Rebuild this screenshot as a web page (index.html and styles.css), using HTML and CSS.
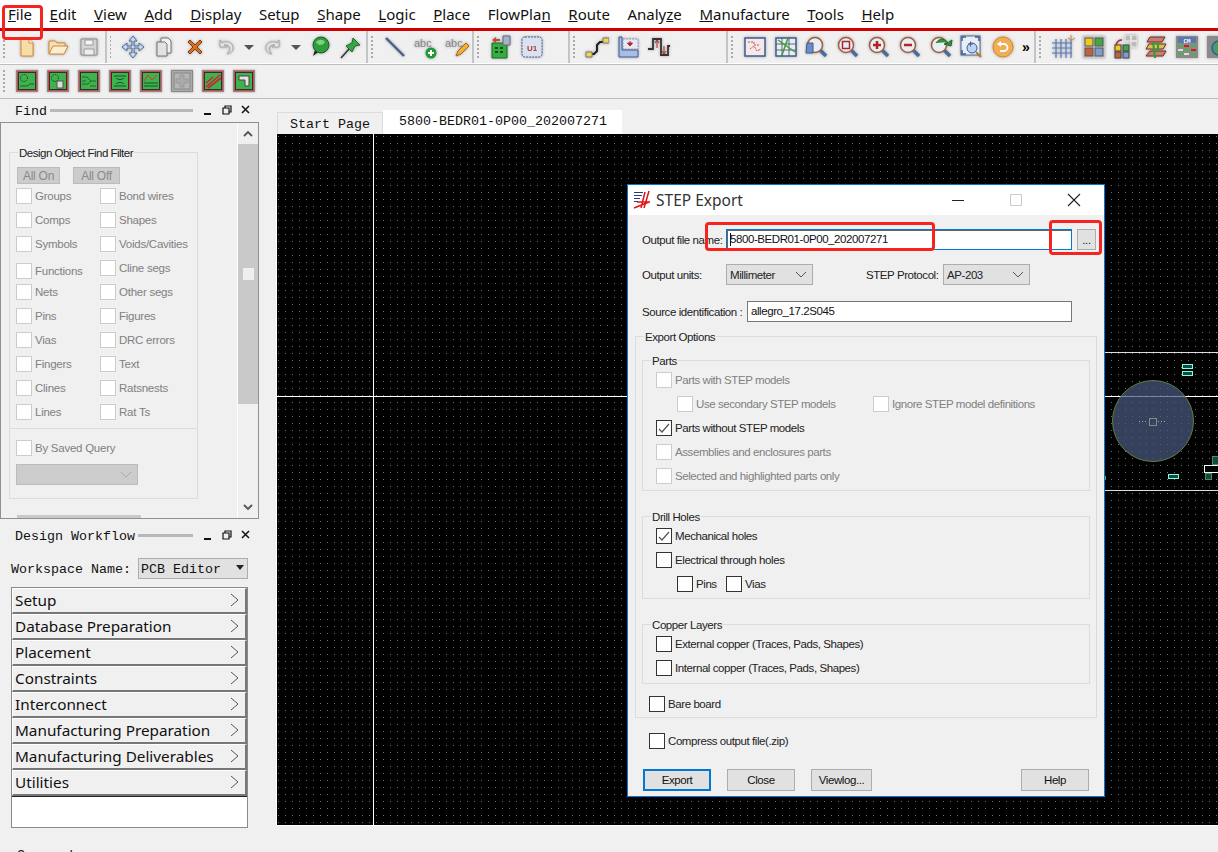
FILE: index.html
```html
<!DOCTYPE html>
<html lang="en">
<head>
<meta charset="utf-8">
<title>STEP Export</title>
<link rel="stylesheet" href="styles.css">
</head>
<body>
<svg class="defs" width="0" height="0" aria-hidden="true">
  <defs>
    <symbol id="i-new" viewBox="0 0 24 24"><path d="M6 4h8l4 4v13H6z" fill="#f6dca6" stroke="#d68a2e"/><path d="M14 4v4h4" fill="#fff" stroke="#d68a2e"/></symbol>
    <symbol id="i-open" viewBox="0 0 24 24"><path d="M3 19V6h6l2 2h8v3" fill="#f7e0b0" stroke="#c98a3c"/><path d="M3 19l4-8h15l-4 8z" fill="#fbeed0" stroke="#c98a3c"/></symbol>
    <symbol id="i-save" viewBox="0 0 24 24"><path d="M4 4h16v16H4z" fill="#d4d4d4" stroke="#8f8f8f"/><path d="M8 5h8v5H8z" fill="#f5f5f5" stroke="#9a9a9a"/><path d="M7 14h10v6H7z" fill="#eee" stroke="#9a9a9a"/></symbol>
    <symbol id="i-move" viewBox="0 0 24 24"><path d="M12 1l4 5h-3v5h5V8l5 4-5 4v-3h-5v5h3l-4 5-4-5h3v-5H6v3l-5-4 5-4v3h5V6H8z" fill="#c9d9ee" stroke="#4d6f9e"/></symbol>
    <symbol id="i-copy" viewBox="0 0 24 24"><path d="M9 3h7l3 3v12H9z" fill="#f2f2f2" stroke="#777"/><path d="M5 7h8l2 2v12H5z" fill="#e2e2e2" stroke="#777"/></symbol>
    <symbol id="i-del" viewBox="0 0 24 24"><path d="M5 7l2-2 5 5 5-5 2 2-5 5 5 5-2 2-5-5-5 5-2-2 5-5z" fill="#d9711e" stroke="#7c3b12"/></symbol>
    <symbol id="i-undo" viewBox="0 0 24 24"><path d="M6 5v7h7l-3-2c3-1 6 1 6 4 0 2-2 4-3 5 4-1 6-3 6-6 0-5-6-8-11-5z" fill="#e3e3e3" stroke="#aaa"/></symbol>
    <symbol id="i-redo" viewBox="0 0 24 24"><path d="M18 5v7h-7l3-2c-3-1-6 1-6 4 0 2 2 4 3 5-4-1-6-3-6-6 0-5 6-8 11-5z" fill="#e3e3e3" stroke="#aaa"/></symbol>
    <symbol id="i-ball" viewBox="0 0 24 24"><path d="M5 21l2-6h6z" fill="#222"/><circle cx="13" cy="10" r="8" fill="#2f9b3c" stroke="#1d5e28"/><path d="M8 7c3-3 7-3 9 0-2 3-6 5-9 0z" fill="#7dd07f"/></symbol>
    <symbol id="i-pin" viewBox="0 0 24 24"><path d="M2 23l8-9" stroke="#333" stroke-width="1.5"/><path d="M7 11l6-3 1-5 7 7-5 1-3 6z" fill="#35a843" stroke="#1f6b2b"/></symbol>
    <symbol id="i-line" viewBox="0 0 24 24"><path d="M3 3l18 18" stroke="#4b5f8a" stroke-width="2.4"/></symbol>
    <symbol id="i-abcp" viewBox="0 0 24 24"><text x="0" y="12" class="svgabc">abc</text><circle cx="17" cy="18" r="5.5" fill="#1f9a33"/><path d="M17 15v6M14 18h6" stroke="#fff" stroke-width="2"/></symbol>
    <symbol id="i-abce" viewBox="0 0 24 24"><text x="0" y="12" class="svgabc">abc</text><path d="M11 21l2-5 8-8 3 3-8 8z" fill="#f0b030" stroke="#a5651a"/></symbol>
    <symbol id="i-brd" viewBox="0 0 24 24"><path d="M3 8h15v15H3z" fill="#35ad41" stroke="#1d6a2a"/><path d="M6 12h3v2H6zM11 12h3v2h-3zM6 16h3v2H6zM11 16h3v2h-3z" fill="#154d1f"/><path d="M3 5l4-3v2h4v2H7v2z" fill="#c9452f"/><path d="M14 1h7v9h-7z" fill="#a7b3c5" stroke="#5e6a80"/></symbol>
    <symbol id="i-u1" viewBox="0 0 24 24"><rect x="2" y="2" width="20" height="20" rx="3" fill="#dbe2ef" stroke="#3f5c95" stroke-dasharray="2 1"/><text x="12" y="16" class="svgu1">U1</text></symbol>
    <symbol id="i-rt" viewBox="0 0 24 24"><path d="M5 19h4l3-3v-6l3-3h4" fill="none" stroke="#222" stroke-width="2"/><path d="M1 17h6v5H1zM18 3h6v5h-6z" fill="#f1d84a" stroke="#777"/></symbol>
    <symbol id="i-cb" viewBox="0 0 24 24"><path d="M3 2h3v13h16v7H3z" fill="#a9bde0" stroke="#3e5a94"/><path d="M7 4h15v10H7z" fill="#e6e9f2" stroke="#8d9bbd" stroke-dasharray="2 1"/><path d="M14 6v4M11.500 8l2.500 3 2.500-3z" fill="#b5232a" stroke="#b5232a"/></symbol>
    <symbol id="i-zig" viewBox="0 0 24 24"><path d="M1 14h5V4h8v16h7V11h2" fill="none" stroke="#333" stroke-width="1.800"/><path d="M10 6v7M8 8l2-3 2 3" stroke="#b5232a" fill="none"/><path d="M17 11v7M15 16l2 3 2-3" stroke="#b5232a" fill="none"/></symbol>
    <symbol id="i-v1" viewBox="0 0 24 24"><rect x="2" y="3" width="20" height="18" fill="#f4e8e8" stroke="#3f5c95" stroke-width="1.500"/><path d="M5 7h6v3h5M7 14l4-3 3 5 4-2" fill="none" stroke="#b55" stroke-dasharray="2 1"/></symbol>
    <symbol id="i-v2" viewBox="0 0 24 24"><rect x="2" y="3" width="20" height="18" fill="#e8f0e6" stroke="#3f5c95" stroke-width="1.500"/><path d="M2 9h20M2 15h20M8 3v18M15 3v18" stroke="#447" stroke-width=".8"/><path d="M4 5l17 12M14 3l-6 17" stroke="#3d9b45" stroke-width="1.500"/></symbol>
    <symbol id="zbase" viewBox="0 0 24 24"><path d="M14 14l7 7" stroke="#4a6a9e" stroke-width="3.500"/><circle cx="10" cy="10" r="7.500" fill="#e8eef6" stroke="#a2603a" stroke-width="1.500"/></symbol>
    <symbol id="i-z0" viewBox="0 0 24 24"><use href="#zbase"/><path d="M2 8h6v10H1z" fill="#6e8dc0" stroke="#3f5c95"/></symbol>
    <symbol id="i-z1" viewBox="0 0 24 24"><use href="#zbase"/><rect x="6.500" y="6.500" width="7" height="7" fill="none" stroke="#b5232a" stroke-width="1.500"/></symbol>
    <symbol id="i-z2" viewBox="0 0 24 24"><use href="#zbase"/><path d="M10 6v8M6 10h8" stroke="#b5232a" stroke-width="2.500"/></symbol>
    <symbol id="i-z3" viewBox="0 0 24 24"><use href="#zbase"/><path d="M6 10h8" stroke="#b5232a" stroke-width="2.500"/></symbol>
    <symbol id="i-z4" viewBox="0 0 24 24"><use href="#zbase"/><path d="M7 8c3-5 9-5 12 0l-4 1 7 2 1-6-3 2" fill="#2f8f3c" stroke="#1d6a2a"/></symbol>
    <symbol id="i-zf" viewBox="0 0 24 24"><rect x="1" y="1" width="19" height="19" fill="#e8eef6" stroke="#51698e"/><path d="M2 6V2h4M19 6V2h-4M2 15v4h4" fill="none" stroke="#3e5a94" stroke-width="1.500"/><circle cx="12" cy="13" r="5" fill="#bcd5f1" stroke="#3e5a94"/><path d="M16 17l5 5" stroke="#b5752a" stroke-width="2"/><path d="M8 9h5M10.500 6.500v5" stroke="#3e5a94"/></symbol>
    <symbol id="i-rf" viewBox="0 0 24 24"><circle cx="12" cy="12" r="10" fill="#f1ad53" stroke="#d98825"/><path d="M8 9h5a3.500 3.500 0 0 1 0 7H9" fill="none" stroke="#fff" stroke-width="1.800"/><path d="M6 9l4-3v6z" fill="#fff"/></symbol>
    <symbol id="i-grid" viewBox="0 0 24 24"><path d="M1 8h20M1 13h20M1 18h20M5 4v19M10 4v19M15 4v19M20 4v19" stroke="#5a78b8" stroke-width="1.200"/><path d="M20 0v4M17 3l3 2M24 3l-3 2" stroke="#e08a2a"/></symbol>
    <symbol id="i-col" viewBox="0 0 24 24"><rect x="1" y="1" width="22" height="22" fill="#c9c9c9"/><rect x="3" y="3" width="8" height="8" fill="#f2c81c" stroke="#555"/><rect x="13" y="3" width="8" height="8" fill="#3fa845" stroke="#555"/><rect x="3" y="13" width="8" height="8" fill="#c0623f" stroke="#555"/><rect x="13" y="13" width="8" height="8" fill="#7f9bd0" stroke="#555"/></symbol>
    <symbol id="i-col2" viewBox="0 0 24 24"><path d="M12 0h6v6h-6zM18 0h6v6h-6zM18 6h6v6h-6z" fill="#bbb" stroke="#eee"/><path d="M3 10c1-4 3-5 6-5" fill="none" stroke="#b5232a" stroke-width="1.500"/><rect x="2" y="10" width="6" height="6" fill="#f2c81c" stroke="#444"/><rect x="10" y="10" width="6" height="6" fill="#3fa845" stroke="#444"/><rect x="2" y="17" width="6" height="6" fill="#c0623f" stroke="#444"/><rect x="10" y="17" width="6" height="6" fill="#7f9bd0" stroke="#444"/></symbol>
    <symbol id="i-lay" viewBox="0 0 24 24"><path d="M6 2h15l-3 5H3z" fill="#c67f6a" stroke="#7b2a2a"/><path d="M5 9h17l-3 5H2z" fill="#d7c24a" stroke="#7b2a2a"/><path d="M6 16h16l-3 5H2z" fill="#c67f6a" stroke="#7b2a2a"/><path d="M9 7l2 16M14 7v10" stroke="#2f9b3c" stroke-width="2"/></symbol>
    <symbol id="i-cm" viewBox="0 0 24 24"><rect x="1" y="1" width="22" height="22" fill="#8a8a8a"/><rect x="3" y="2" width="18" height="6" fill="#5a78b0"/><text x="12" y="7.500" class="svgcm">CM</text><path d="M3 10h5v2H3zM16 10h5v2h-5zM9 14h5v2H9zM3 18h5v2H3zM16 18h5v2h-5z" fill="#3fbb45"/><path d="M9 10h5v2H9zM16 14h5v2h-5z" fill="#e0151a"/><path d="M3 14h5v2H3zM9 18h5v2H9z" fill="#ddd"/></symbol>
    <symbol id="i-gl" viewBox="0 0 24 24"><rect x="1" y="1" width="22" height="22" fill="#8a8a8a"/><circle cx="13" cy="13" r="7" fill="#4a9c5e" stroke="#2a5e9e" stroke-width="1.500"/></symbol>
    <symbol id="t-base" viewBox="0 0 22 22"><rect x=".5" y=".5" width="21" height="21" fill="#c64a50" stroke="#8a8a8a"/><rect x="2.500" y="2.500" width="17" height="17" fill="#3fb34b" stroke="#3a2a2a"/></symbol>
  </defs>
</svg>

<header class="menubar">
  <span class="m"><u>F</u>ile</span><span class="m"><u>E</u>dit</span><span class="m"><u>V</u>iew</span><span class="m"><u>A</u>dd</span><span class="m"><u>D</u>isplay</span><span class="m">Set<u>u</u>p</span><span class="m"><u>S</u>hape</span><span class="m"><u>L</u>ogic</span><span class="m"><u>P</u>lace</span><span class="m">FlowPla<u>n</u></span><span class="m"><u>R</u>oute</span><span class="m">Analy<u>z</u>e</span><span class="m"><u>M</u>anufacture</span><span class="m"><u>T</u>ools</span><span class="m"><u>H</u>elp</span>
</header>

<div class="toolbar">
  <div class="tgroup g1"><i class="grip"></i>
    <svg class="ic"><use href="#i-new"/></svg><svg class="ic"><use href="#i-open"/></svg><svg class="ic"><use href="#i-save"/></svg>
  </div>
  <div class="tgroup g2"><i class="grip"></i>
    <svg class="ic"><use href="#i-move"/></svg><svg class="ic"><use href="#i-copy"/></svg><svg class="ic"><use href="#i-del"/></svg><svg class="ic"><use href="#i-undo"/></svg><span class="drop"></span><svg class="ic"><use href="#i-redo"/></svg><span class="drop"></span><svg class="ic"><use href="#i-ball"/></svg><svg class="ic"><use href="#i-pin"/></svg>
  </div>
  <div class="tgroup g3"><i class="grip"></i>
    <svg class="ic"><use href="#i-line"/></svg><svg class="ic"><use href="#i-abcp"/></svg><svg class="ic"><use href="#i-abce"/></svg>
  </div>
  <div class="tgroup g4"><i class="grip"></i>
    <svg class="ic"><use href="#i-brd"/></svg><svg class="ic"><use href="#i-u1"/></svg>
  </div>
  <div class="tgroup g5"><i class="grip"></i>
    <svg class="ic"><use href="#i-rt"/></svg><svg class="ic"><use href="#i-cb"/></svg><svg class="ic"><use href="#i-zig"/></svg>
  </div>
  <div class="tgroup g6"><i class="grip"></i>
    <svg class="ic"><use href="#i-v1"/></svg><svg class="ic"><use href="#i-v2"/></svg><svg class="ic"><use href="#i-z0"/></svg><svg class="ic"><use href="#i-z1"/></svg><svg class="ic"><use href="#i-z2"/></svg><svg class="ic"><use href="#i-z3"/></svg><svg class="ic"><use href="#i-z4"/></svg><svg class="ic"><use href="#i-zf"/></svg><svg class="ic"><use href="#i-rf"/></svg><span class="more">»</span>
  </div>
  <div class="tgroup g7"><i class="grip"></i>
    <svg class="ic"><use href="#i-grid"/></svg><svg class="ic"><use href="#i-col"/></svg><svg class="ic"><use href="#i-col2"/></svg><svg class="ic"><use href="#i-lay"/></svg><svg class="ic"><use href="#i-cm"/></svg><svg class="ic"><use href="#i-gl"/></svg>
  </div>
</div>

<div class="toolbar second">
  <div class="tgroup"><i class="grip"></i>
    <svg class="ts" viewBox="0 0 22 22"><use href="#t-base" width="22" height="22"/><circle cx="8" cy="8" r="3.500" fill="none" stroke="#123" stroke-dasharray="1 1"/><path d="M4 16h7l3-2h4" stroke="#163" fill="none"/></svg>
    <svg class="ts" viewBox="0 0 22 22"><use href="#t-base" width="22" height="22"/><circle cx="8" cy="8" r="3.500" fill="none" stroke="#123" stroke-dasharray="1 1"/><rect x="10" y="11" width="6" height="7" fill="#ddd" stroke="#555"/></svg>
    <svg class="ts" viewBox="0 0 22 22"><use href="#t-base" width="22" height="22"/><path d="M4 7h5l4 4h5M4 14h6l3-3M4 11h4M12 16h6" stroke="#263" fill="none"/></svg>
    <svg class="ts" viewBox="0 0 22 22"><use href="#t-base" width="22" height="22"/><path d="M5 6h12M5 16h12M7 8c2 2 6 2 8 0M7 14c2-2 6-2 8 0" stroke="#153" fill="none"/></svg>
    <svg class="ts" viewBox="0 0 22 22"><use href="#t-base" width="22" height="22"/><path d="M4 11l4-6 4 5 5-5" stroke="#d33" fill="none"/><path d="M4 13h14M4 16h14" stroke="#153"/></svg>
    <svg class="ts" viewBox="0 0 22 22"><rect x=".5" y=".5" width="21" height="21" fill="#aaa" stroke="#888"/><rect x="3" y="3" width="16" height="16" fill="#b5b5b5" stroke="#888"/><path d="M9 5h4v4h4v4h-4v4H9v-4H5V9h4z" fill="#aaa" stroke="#999"/></svg>
    <svg class="ts" viewBox="0 0 22 22"><use href="#t-base" width="22" height="22"/><path d="M4 17L18 5M6 18L19 8M4 13l7-6" stroke="#c23" stroke-width="1.600"/></svg>
    <svg class="ts" viewBox="0 0 22 22"><use href="#t-base" width="22" height="22"/><path d="M6 6h10v10h-4v-6H6z" fill="#e4e4e4" stroke="#444"/></svg>
  </div>
</div>

<main class="workspace">
  <aside class="side">
    <div class="dockhead">
      <span class="docktitle">Find</span><i class="dockbar"></i>
      <svg class="dockbtns" viewBox="0 0 50 14" width="50" height="14"><path d="M0 10h7" stroke="#111" stroke-width="2"/><path d="M19 4h6v6h-6zM21 4V2h6v6h-2" fill="none" stroke="#111" stroke-width="1.200"/><path d="M38 2l7 7M45 2l-7 7" stroke="#111" stroke-width="1.500"/></svg>
    </div>
    <div class="pane">
      <div class="panebody">
        <section class="findset">
          <span class="flegend">Design Object Find Filter</span>
          <div class="allbtns"><span class="allbtn on">All On</span><span class="allbtn off">All Off</span></div>
          <div class="findgrid">
            <label class="fi"><i class="cb"></i>Groups</label><label class="fi"><i class="cb"></i>Bond wires</label>
            <label class="fi"><i class="cb"></i>Comps</label><label class="fi"><i class="cb"></i>Shapes</label>
            <label class="fi"><i class="cb"></i>Symbols</label><label class="fi"><i class="cb"></i>Voids/Cavities</label>
            <label class="fi low"><i class="cb"></i>Functions</label><label class="fi"><i class="cb"></i>Cline segs</label>
            <label class="fi"><i class="cb"></i>Nets</label><label class="fi"><i class="cb"></i>Other segs</label>
            <label class="fi"><i class="cb"></i>Pins</label><label class="fi"><i class="cb"></i>Figures</label>
            <label class="fi"><i class="cb"></i>Vias</label><label class="fi"><i class="cb"></i>DRC errors</label>
            <label class="fi"><i class="cb"></i>Fingers</label><label class="fi"><i class="cb"></i>Text</label>
            <label class="fi"><i class="cb"></i>Clines</label><label class="fi"><i class="cb"></i>Ratsnests</label>
            <label class="fi"><i class="cb"></i>Lines</label><label class="fi"><i class="cb"></i>Rat Ts</label>
          </div>
          <div class="saved">
            <label class="fi"><i class="cb"></i>By Saved Query</label>
            <div class="savedsel"><svg width="12" height="8" viewBox="0 0 12 8"><path d="M1 1l5 5 5-5" fill="none" stroke="#aaa"/></svg></div>
          </div>
        </section>
        <i class="cutbar"></i>
      </div>
      <div class="vscroll">
        <svg class="arrow" width="20" height="21" viewBox="0 0 20 21"><path d="M6 13l4-4 4 4" fill="none" stroke="#555" stroke-width="1.800"/></svg>
        <div class="track"><div class="thumb"><i class="thumbgrip"></i></div></div>
        <svg class="arrow" width="20" height="21" viewBox="0 0 20 21"><path d="M6 8l4 4 4-4" fill="none" stroke="#555" stroke-width="1.800"/></svg>
      </div>
    </div>
    <div class="dockhead second">
      <span class="docktitle">Design Workflow</span><i class="dockbar"></i>
      <svg class="dockbtns" viewBox="0 0 50 14" width="50" height="14"><path d="M0 10h7" stroke="#111" stroke-width="2"/><path d="M19 4h6v6h-6zM21 4V2h6v6h-2" fill="none" stroke="#111" stroke-width="1.200"/><path d="M38 2l7 7M45 2l-7 7" stroke="#111" stroke-width="1.500"/></svg>
    </div>
    <div class="wsrow"><span class="wslabel">Workspace Name:</span><span class="wssel">PCB Editor<i class="wsarrow"></i></span></div>
    <div class="flow">
      <div class="fbtn"><span>Setup</span><svg width="10" height="14" viewBox="0 0 10 14"><path d="M1 1l7 6-7 6" fill="none" stroke="#555"/></svg></div>
      <div class="fbtn"><span>Database Preparation</span><svg width="10" height="14" viewBox="0 0 10 14"><path d="M1 1l7 6-7 6" fill="none" stroke="#555"/></svg></div>
      <div class="fbtn"><span>Placement</span><svg width="10" height="14" viewBox="0 0 10 14"><path d="M1 1l7 6-7 6" fill="none" stroke="#555"/></svg></div>
      <div class="fbtn"><span>Constraints</span><svg width="10" height="14" viewBox="0 0 10 14"><path d="M1 1l7 6-7 6" fill="none" stroke="#555"/></svg></div>
      <div class="fbtn"><span>Interconnect</span><svg width="10" height="14" viewBox="0 0 10 14"><path d="M1 1l7 6-7 6" fill="none" stroke="#555"/></svg></div>
      <div class="fbtn"><span>Manufacturing Preparation</span><svg width="10" height="14" viewBox="0 0 10 14"><path d="M1 1l7 6-7 6" fill="none" stroke="#555"/></svg></div>
      <div class="fbtn"><span>Manufacturing Deliverables</span><svg width="10" height="14" viewBox="0 0 10 14"><path d="M1 1l7 6-7 6" fill="none" stroke="#555"/></svg></div>
      <div class="fbtn"><span>Utilities</span><svg width="10" height="14" viewBox="0 0 10 14"><path d="M1 1l7 6-7 6" fill="none" stroke="#555"/></svg></div>
      <div class="flowblank"></div>
    </div>
    <div class="cmd">Command</div>
  </aside>

  <section class="docs">
    <nav class="tabs"><span class="tab">Start Page</span><span class="tab active">5800-BEDR01-0P00_202007271</span></nav>
    <div class="canvas">
      <svg class="board" width="941" height="691" viewBox="277 134 941 691">
        <path d="M373.500 134v691M277 396.500h941" stroke="#fff"/>
        <path d="M1104 352.500h114M1104 490.500h114" stroke="#ddd"/>
        <circle cx="1153" cy="421" r="40.500" fill="#4a5a80" fill-opacity=".72" stroke="#5f7f3f"/>
        <rect x="1149.500" y="418.500" width="7" height="7" fill="none" stroke="#7f8f80"/>
        <path d="M1139 421.500h9M1158 421.500h9" stroke="#a0a6b5" stroke-dasharray="1 2"/>
        <path d="M1105.500 476v4" stroke="#5f9f4f"/>
        <g fill="#0f4a44" stroke="#7dffe0">
          <rect x="1182.500" y="364.500" width="10" height="4"/>
          <rect x="1182.500" y="371.500" width="10" height="4"/>
          <rect x="1168.500" y="474.500" width="10" height="4"/>
          <rect x="1212.500" y="456.500" width="6" height="8" stroke="#4f8a4f"/>
          <rect x="1205.500" y="473.500" width="6" height="6" stroke="#4f8a4f"/>
          <rect x="1204.500" y="465.500" width="14" height="7" stroke="#e8fff8" fill="#000"/>
        </g>
      </svg>
    </div>
  </section>
</main>

<section class="dialog">
  <header class="dtitle">
    <svg class="dlogo" width="20" height="20" viewBox="0 0 20 20"><path d="M2 2.500h9M2 5.500h8M2 8.500h6M2 11.500h4" stroke="#223a8a"/><path d="M13 2L9 18M17 1l-5 17M5 12h13M2 18l15-6" stroke="#e01515" stroke-width="1.500"/></svg>
    <span class="dname">STEP Export</span>
    <span class="wbtns">
      <svg width="14" height="14" viewBox="0 0 14 14"><path d="M1 7.500h12" stroke="#222"/></svg>
      <svg width="14" height="14" viewBox="0 0 14 14"><rect x="1.500" y="1.500" width="11" height="11" fill="none" stroke="#ccc"/></svg>
      <svg width="14" height="14" viewBox="0 0 14 14"><path d="M1 1l12 12M13 1L1 13" stroke="#222" stroke-width="1.100"/></svg>
    </span>
  </header>
  <div class="dbody">
    <div class="drow first">
      <span class="dlabel w84">Output file name:</span>
      <div class="txt focus"><span class="caret"></span>5800-BEDR01-0P00_202007271</div>
      <span class="pbtn small">...</span>
    </div>
    <div class="drow gap14">
      <span class="dlabel w84">Output units:</span>
      <div class="sel s87">Millimeter<svg width="12" height="8" viewBox="0 0 12 8"><path d="M1 1l5 5 5-5" fill="none" stroke="#555"/></svg></div>
      <span class="dlabel proto">STEP Protocol:</span>
      <div class="sel s87">AP-203<svg width="12" height="8" viewBox="0 0 12 8"><path d="M1 1l5 5 5-5" fill="none" stroke="#555"/></svg></div>
    </div>
    <div class="drow gap16">
      <span class="dlabel w105">Source identification :</span>
      <div class="txt src">allegro_17.2S045</div>
    </div>
    <section class="grp options">
      <span class="lg">Export Options</span>
      <section class="grp parts">
        <span class="lg">Parts</span>
        <label class="ck dis"><i class="cb"></i>Parts with STEP models</label>
        <div class="ckline in21">
          <label class="ck dis w196"><i class="cb"></i>Use secondary STEP models</label>
          <label class="ck dis"><i class="cb"></i>Ignore STEP model definitions</label>
        </div>
        <label class="ck"><i class="cb dark"><svg width="14" height="14" viewBox="0 0 14 14"><path d="M2 8l3 3 7-8" fill="none" stroke="#555" stroke-width="1.200"/></svg></i>Parts without STEP models</label>
        <label class="ck dis"><i class="cb"></i>Assemblies and enclosures parts</label>
        <label class="ck dis"><i class="cb"></i>Selected and highlighted parts only</label>
      </section>
      <section class="grp drill">
        <span class="lg">Drill Holes</span>
        <label class="ck"><i class="cb dark"><svg width="14" height="14" viewBox="0 0 14 14"><path d="M2 8l3 3 7-8" fill="none" stroke="#555" stroke-width="1.200"/></svg></i>Mechanical holes</label>
        <label class="ck"><i class="cb dark"></i>Electrical through holes</label>
        <div class="ckline in21">
          <label class="ck w49"><i class="cb dark"></i>Pins</label>
          <label class="ck"><i class="cb dark"></i>Vias</label>
        </div>
      </section>
      <section class="grp copper">
        <span class="lg">Copper Layers</span>
        <label class="ck"><i class="cb dark"></i>External copper (Traces, Pads, Shapes)</label>
        <label class="ck"><i class="cb dark"></i>Internal copper (Traces, Pads, Shapes)</label>
      </section>
      <label class="ck bare"><i class="cb dark"></i>Bare board</label>
    </section>
    <label class="ck compress"><i class="cb dark"></i>Compress output file(.zip)</label>
    <div class="actions">
      <span class="pbtn w68 def">Export</span>
      <span class="pbtn w68">Close</span>
      <span class="pbtn w61">Viewlog...</span>
      <span class="pbtn w68 right">Help</span>
    </div>
  </div>
</section>

<i class="mark m-file"></i>
<i class="mark m-name"></i>
<i class="mark m-dots"></i>
</body>
</html>
```

FILE: styles.css
```css
* { box-sizing: border-box; }
html, body { margin: 0; padding: 0; }
body {
  width: 1218px;
  height: 852px;
  overflow: hidden;
  position: relative;
  background: #f0f0f0;
  font-family: "Noto Sans", sans-serif;
  display: flex;
  flex-direction: column;
}
i { font-style: normal; display: block; }
.defs { position: absolute; }
.svgabc { font: 11px "Liberation Sans", sans-serif; fill: #888; }
.svgu1 { font: bold 8px "Liberation Sans", sans-serif; fill: #a33; text-anchor: middle; }
.svgcm { font: bold 6px "Liberation Mono", monospace; fill: #fff; text-anchor: middle; }

/* menu */
.menubar {
  flex: 0 0 31px;
  height: 31px;
  background: #fff;
  border-bottom: 3px solid #d00000;
  padding-left: 8px;
  display: flex;
  align-items: center;
  gap: 17.6px;
  font-size: 15px;
  color: #111;
  white-space: nowrap;
}
.m { line-height: 28px; }

/* toolbars */
.toolbar {
  flex: 0 0 34px;
  height: 34px;
  display: flex;
  overflow: hidden;
  border-bottom: 1px solid #bdbdbd;
  box-shadow: inset 0 -1px 0 #fff;
}
.toolbar.second { flex-basis: 34px; height: 34px; box-shadow: none; }
.tgroup {
  display: flex;
  align-items: center;
  flex: none;
  border-right: 2px solid #c4c4c4;
  height: 32px;
}
.toolbar.second .tgroup { border-right: 0; }
.g1 { width: 107px; }
.g2 { width: 261px; }
.g3 { width: 106px; }
.g4 { width: 96px; }
.g5 { width: 158px; }
.g6 { width: 308px; }
.g7 { width: 300px; border-right: 0; }
.grip {
  width: 2px;
  height: 22px;
  margin: 0 6px 0 3px;
  background: repeating-linear-gradient(to bottom, #aaa 0 2px, transparent 2px 4px);
}
.ic {
  width: 24px;
  height: 24px;
  margin: 0 3.5px;
  flex: none;
  filter: drop-shadow(0 0 1.5px #9c9c9c);
}
.drop {
  flex: none;
  width: 16px;
  display: flex;
  justify-content: center;
}
.drop::after {
  content: "";
  border-top: 5px solid #555;
  border-left: 5px solid transparent;
  border-right: 5px solid transparent;
}
.more { width: 16px; font: bold 14px "Liberation Sans", sans-serif; color: #000; text-align: center; flex: none; }
.ts {
  width: 22px;
  height: 22px;
  margin: 0 4.5px;
  flex: none;
  filter: drop-shadow(0 0 1px #999);
}

/* workspace */
.workspace { flex: 1; display: flex; min-height: 0; }
.side { flex: 0 0 276px; width: 276px; overflow: hidden; }
.dockhead {
  height: 23px;
  display: flex;
  align-items: center;
  padding-left: 15px;
  width: 258px;
}
.dockhead.second { height: 33px; }
.docktitle {
  font: 13.33px "Liberation Mono", monospace;
  color: #111;
  white-space: nowrap;
  padding-top: 2px;
}
.dockbar { flex: 1; height: 3px; background: #b8b8b8; margin-left: 3px; }
.dockbtns { flex: none; margin: 0 4px 0 11px; }
.pane {
  width: 259px;
  height: 397px;
  border: 1px solid #8a9199;
  display: flex;
  overflow: hidden;
}
.panebody { width: 236px; flex: none; padding: 29px 0 0 8px; overflow: hidden; }
.findset {
  position: relative;
  width: 189px;
  height: 347px;
  border: 1px solid #dcdcdc;
  padding: 14px 0 0 6px;
  font: 11.5px "Liberation Sans", sans-serif;
  letter-spacing: -0.25px;
  color: #808080;
}
.flegend {
  position: absolute;
  top: -7px;
  left: 8px;
  padding: 0 1px;
  background: #f0f0f0;
  color: #222;
  font-size: 11.5px;
  letter-spacing: -0.5px;
  line-height: 14px;
  white-space: nowrap;
}
.allbtns { display: flex; gap: 13px; height: 17px; padding-left: 1px; }
.allbtn {
  background: #ccc;
  border: 1px solid #bbb;
  text-align: center;
  line-height: 16px;
  color: #8a8a8a;
  font-size: 12px;
}
.allbtn.on { width: 43px; }
.allbtn.off { width: 47px; }
.findgrid { display: grid; grid-template-columns: 84px 90px; grid-auto-rows: 24px; }
.fi { display: flex; align-items: center; gap: 3px; white-space: nowrap; }
.fi.low { padding-top: 6px; }
.cb {
  width: 16px;
  height: 16px;
  flex: none;
  background: #fff;
  border: 1px solid #ccc;
  display: flex;
  align-items: center;
  justify-content: center;
}
.cb.dark { border-color: #333; }
.saved {
  margin: 4px 0 0 -6px;
  height: 68px;
  border-top: 1px solid #dcdcdc;
  padding: 7px 0 0 6px;
}
.saved .fi { height: 24px; }
.savedsel {
  margin-top: 4px;
  width: 122px;
  height: 21px;
  background: #ccc;
  border: 1px solid #bbb;
  display: flex;
  align-items: center;
  justify-content: flex-end;
  padding-right: 5px;
}
.cutbar { width: 124px; height: 4px; background: #c8c8c8; margin: 16px 0 0 8px; }
.vscroll {
  flex: 0 0 21px;
  width: 21px;
  border-left: 1px solid #fff;
  display: flex;
  flex-direction: column;
}
.arrow { flex: none; display: block; }
.track { flex: 1; }
.thumb {
  height: 260px;
  background: #c9c9c9;
  display: flex;
  align-items: center;
  justify-content: center;
}
.thumbgrip { width: 11px; height: 12px; background: #efefef; }

.wsrow { display: flex; align-items: center; height: 21px; margin-top: 6px; padding-left: 11px; }
.wslabel { font: 13.33px "Liberation Mono", monospace; color: #111; width: 127px; white-space: nowrap; padding-top: 2px; }
.wssel {
  position: relative;
  width: 110px;
  height: 21px;
  background: #e1e1e1;
  border: 1px solid #adadad;
  font: 13.33px "Liberation Mono", monospace;
  color: #111;
  padding-left: 2px;
  line-height: 21px;
}
.wsarrow {
  position: absolute;
  right: 3px;
  top: 6px;
  border-top: 5px solid #222;
  border-left: 4px solid transparent;
  border-right: 4px solid transparent;
}
.flow { margin: 8px 0 0 11px; width: 237px; border: 1px solid #8a8a8a; }
.fbtn {
  height: 26px;
  display: flex;
  align-items: center;
  justify-content: space-between;
  padding: 0 5px 2px 2px;
  font-size: 15.3px;
  color: #111;
  background: #f0f0f0;
  border-top: 1px solid #fff;
  border-left: 1px solid #fff;
  border-right: 2px solid #777;
  border-bottom: 2px solid #777;
}
.flowblank { height: 31px; background: #fff; border-top: 1px solid #222; }
.cmd { font: 13.33px/16px "Liberation Mono", monospace; color: #111; margin: 20px 0 0 17px; }

/* documents */
.docs { flex: 1; display: flex; flex-direction: column; min-width: 0; }
.tabs { height: 35px; padding-left: 1px; display: flex; align-items: flex-end; }
.tab {
  font: 13.33px/21px "Liberation Mono", monospace;
  color: #111;
  white-space: nowrap;
  height: 22px;
  padding: 1px 12px 0;
  border: 1px solid #dcdcdc;
  border-bottom: 0;
  width: 106px;
}
.tab.active {
  background: #fff;
  width: 239px;
  height: 24px;
  padding: 1px 0 0 16px;
  border: 0;
}
.canvas {
  width: 942px;
  height: 692px;
  border-left: 1px solid #fff;
  border-bottom: 1px solid #fff;
  position: relative;
  overflow: hidden;
  background:
    linear-gradient(to right, #000 6px, transparent 6px) 2px 0 / 7px 7px,
    linear-gradient(to bottom, #000 6px, transparent 6px) 0 3px / 7px 7px,
    #6f6f6f;
}
.board { position: absolute; left: 0; top: 0; }

/* dialog */
.dialog {
  position: absolute;
  left: 627px;
  top: 184px;
  width: 478px;
  height: 613px;
  background: #f0f0f0;
  border: 1px solid #0078d7;
  font: 11.5px "Liberation Sans", sans-serif;
  color: #222;
  display: flex;
  flex-direction: column;
}
.dtitle {
  height: 30px;
  background: #fff;
  flex: none;
  display: flex;
  align-items: center;
  padding-left: 4px;
}
.dname { font: 15.5px "Noto Sans", sans-serif; color: #333; margin-left: 4px; flex: 1; }
.wbtns { display: flex; align-items: center; gap: 44px; padding-right: 23px; }
.dbody { flex: 1; padding: 14px 8px 0 7px; letter-spacing: -0.42px; }
.drow { display: flex; align-items: center; height: 21px; white-space: nowrap; padding-left: 7px; }
.gap14 { margin-top: 14px; }
.gap16 { margin-top: 16px; }
.dlabel { display: block; }
.w84 { width: 84px; }
.w105 { width: 105px; }
.proto { margin-left: 53px; width: 77px; }
.txt {
  height: 21px;
  background: #fff;
  font-size: 11.5px;
  color: #111;
  line-height: 19px;
  padding-left: 3px;
}
.txt.focus {
  position: relative;
  width: 346px;
  border: 1px solid #0078d7;
  box-shadow: inset 1px 1px 0 #666;
}
.caret { position: absolute; left: 3px; top: 3px; width: 1px; height: 13px; background: #111; }
.txt.src { width: 325px; border: 1px solid #777; box-shadow: inset 0 0 0 1px #fff; }
.pbtn {
  display: block;
  height: 22px;
  background: #e1e1e1;
  border: 1px solid #adadad;
  text-align: center;
  line-height: 20px;
  color: #111;
  font-size: 11.5px;
  flex: none;
}
.pbtn.small { width: 19px; height: 21px; margin-left: 5px; }
.sel {
  height: 21px;
  background: #e1e1e1;
  border: 1px solid #adadad;
  display: flex;
  align-items: center;
  justify-content: space-between;
  padding: 0 5px 0 3px;
  font-size: 11.5px;
}
.s87 { width: 87px; }
.grp {
  position: relative;
  border: 1px solid #dcdcdc;
}
.lg {
  position: absolute;
  top: -7px;
  left: 8px;
  padding: 0 1px;
  background: #f0f0f0;
  line-height: 14px;
  white-space: nowrap;
}
.options { margin-top: 14px; width: 462px; height: 382px; padding: 23px 6px 0 6px; }
.parts { height: 131px; padding: 7px 0 0 13px; }
.drill { margin-top: 25px; height: 83px; padding: 7px 0 0 13px; }
.copper { margin-top: 25px; height: 60px; padding: 7px 0 0 13px; }
.ck { display: flex; align-items: center; gap: 3px; height: 24px; white-space: nowrap; }
.ck.dis { color: #808080; }
.ckline { display: flex; height: 24px; }
.in21 { padding-left: 21px; }
.w196 { width: 196px; }
.w49 { width: 49px; }
.bare { margin: 8px 0 0 7px; }
.compress { margin: 11px 0 0 14px; }
.actions { display: flex; gap: 16px; margin-top: 16px; padding-left: 8px; }
.w68 { width: 68px; }
.w61 { width: 61px; }
.def { border: 2px solid #0078d7; line-height: 18px; }
.right { margin-left: 133px; }

/* annotation marks */
.mark { position: absolute; border: 3px solid #f5241f; border-radius: 4px; }
.m-file { left: 2px; top: 5px; width: 41px; height: 35px; }
.m-name { left: 705px; top: 222px; width: 230px; height: 29px; }
.m-dots { left: 1049px; top: 220px; width: 53px; height: 35px; }
```
